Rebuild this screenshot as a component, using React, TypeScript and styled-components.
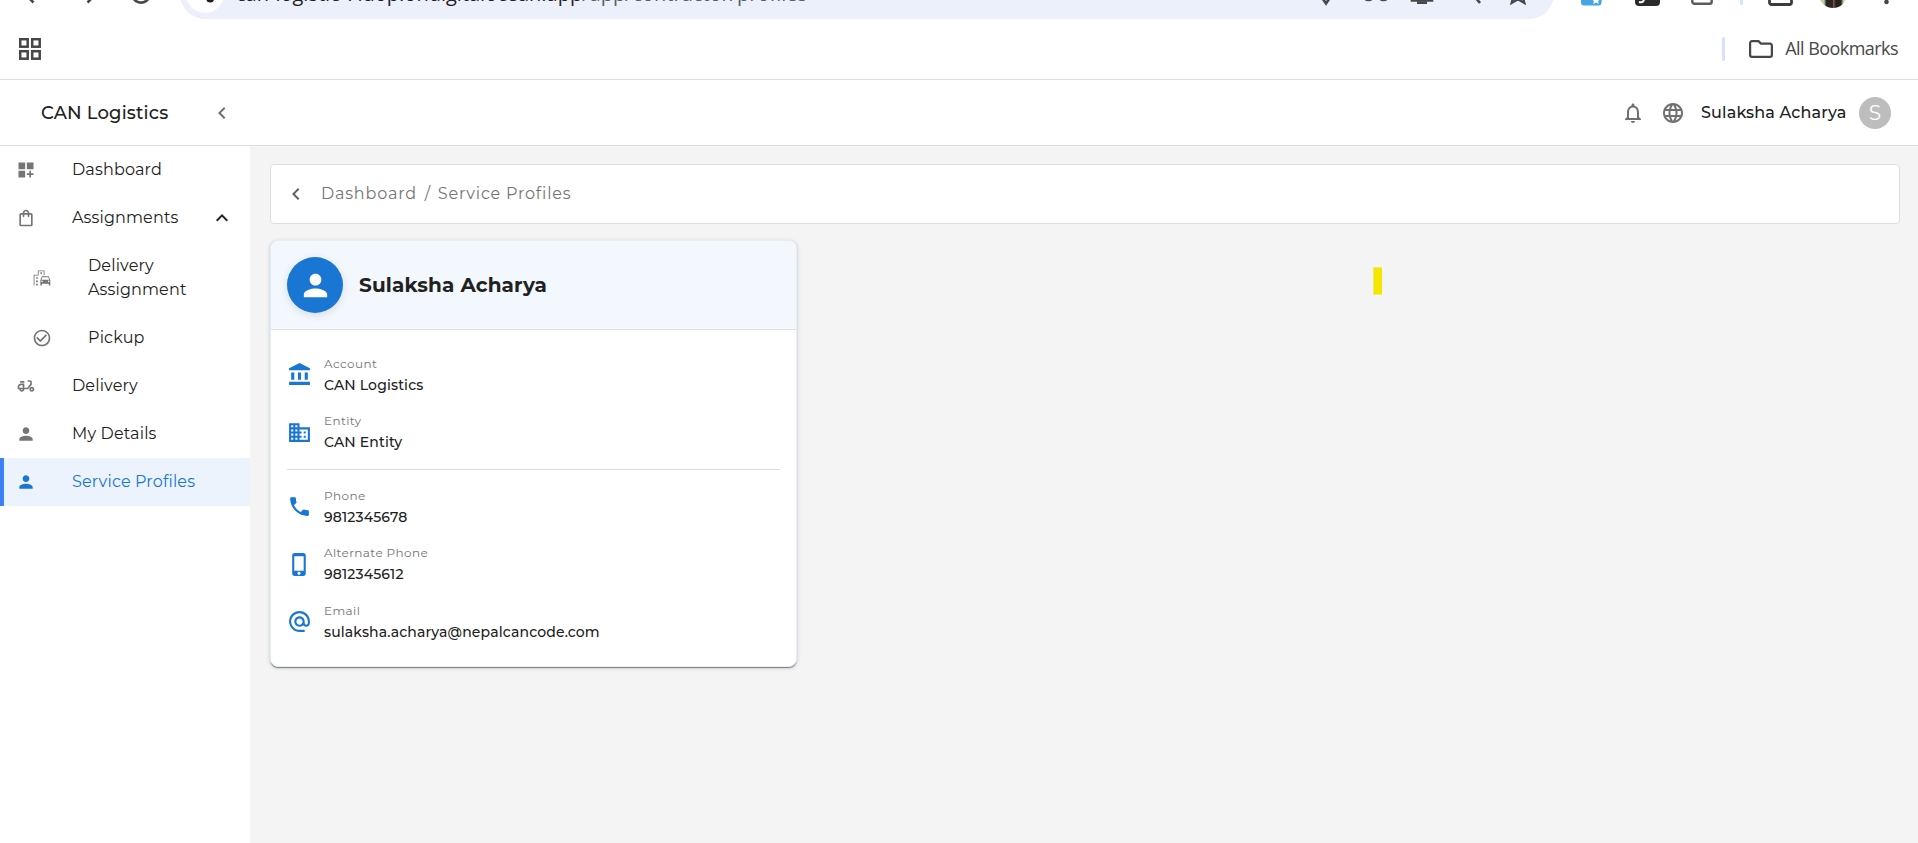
import React from "react";
import styled, { createGlobalStyle } from "styled-components";
import {
  MdAccountBalance,
  MdAlternateEmail,
  MdCheckCircleOutline,
  MdDashboardCustomize,
  MdDomain,
  MdKeyboardArrowLeft,
  MdKeyboardArrowUp,
  MdLanguage,
  MdNotificationsNone,
  MdOutlineDeliveryDining,
  MdOutlineEmojiTransportation,
  MdOutlineShoppingBag,
  MdPerson,
  MdPhone,
  MdPhoneIphone,
} from "react-icons/md";

const GlobalStyle = createGlobalStyle`
  * { box-sizing: border-box; }
  body {
    margin: 0;
    overflow: hidden;
    background: #fff;
    color: #212121;
    font-family: Montserrat, Inter, "Liberation Sans", sans-serif;
  }
  svg { display: block; flex: none; }
`;

const Page = styled.div`
  display: flex;
  flex-direction: column;
  height: 843px;
  overflow: hidden;
`;

/* Browser chrome */

const ChromeClip = styled.div`
  flex: none;
  display: flex;
  align-items: flex-end;
  height: 19px;
  overflow: hidden;
  background: #fff;
`;

const ChromeRow = styled.div`
  flex: none;
  display: flex;
  align-items: center;
  width: 100%;
  height: 50px;
  color: #474747;
`;

const ChromeItem = styled.span<{ $gap: number }>`
  flex: none;
  display: flex;
  margin-left: ${(p) => p.$gap}px;
`;

const AddressBar = styled.div`
  flex: none;
  display: flex;
  align-items: center;
  width: 1374px;
  height: 50px;
  margin-left: 26px;
  padding-left: 6px;
  border-radius: 25px;
  background: #ebf0fa;
`;

const SiteInfo = styled.div`
  flex: none;
  display: flex;
  align-items: center;
  justify-content: center;
  width: 38px;
  height: 38px;
  border-radius: 50%;
  background: #fff;
  color: #1f1f1f;
`;

const Address = styled.div`
  flex: none;
  width: 1075px;
  margin-left: 12px;
  font: 400 20px/28px "Open Sans", sans-serif;
  white-space: nowrap;
  color: #1f1f1f;
`;

const AddressPath = styled.span`
  color: #5a5d61;
`;

const ToolbarDivider = styled.span`
  flex: none;
  width: 3px;
  height: 22px;
  margin-left: 27px;
  border-radius: 2px;
  background: #d3e3fd;
`;

const ProfilePhoto = styled.span`
  flex: none;
  width: 28px;
  height: 28px;
  margin-left: 26px;
  border-radius: 50%;
  background: linear-gradient(90deg, #b9cfa6 0 18%, #2b2523 26% 48%, #7a5a48 52%, #26211f 60% 78%, #cfe0c0 88%);
`;

const BookmarkBar = styled.div`
  flex: none;
  display: flex;
  align-items: center;
  justify-content: space-between;
  height: 61px;
  padding: 0 20px 1px 19px;
  border-bottom: 1px solid #dedede;
  color: #474747;
`;

const BookmarkFolder = styled.div`
  display: flex;
  align-items: center;
  font: 400 18px/24px "Open Sans", sans-serif;
  letter-spacing: -0.55px;
`;

const BookmarkDivider = styled.span`
  width: 3px;
  height: 24px;
  margin-right: 24px;
  border-radius: 2px;
  background: #d3e3fd;
`;

const FolderLabel = styled.span`
  margin: -1px 0 0 12px;
`;

/* Application header */

const Header = styled.header`
  flex: none;
  display: flex;
  align-items: center;
  justify-content: space-between;
  height: 66px;
  padding: 0 27px 0 41px;
  border-bottom: 1px solid #dedede;
  background: #fff;
`;

const HeaderSide = styled.div`
  display: flex;
  align-items: center;
  color: #707070;
`;

const Brand = styled.div`
  width: 169px;
  font-size: 18px;
  font-weight: 500;
  letter-spacing: 0.15px;
  color: #212121;
`;

const HeaderIcon = styled.span`
  display: flex;
  margin-right: 16px;
`;

const UserName = styled.span`
  width: 158px;
  font-size: 16px;
  font-weight: 500;
  letter-spacing: 0.15px;
  color: #212121;
`;

const UserBadge = styled.span`
  display: flex;
  align-items: center;
  justify-content: center;
  width: 32px;
  height: 32px;
  border-radius: 50%;
  background: #bdbdbd;
  color: #fff;
  font-size: 20px;
`;

/* Sidebar */

const Body = styled.div`
  flex: 1;
  display: flex;
  min-height: 0;
`;

const Sidebar = styled.nav`
  flex: none;
  width: 250px;
  background: #fff;
`;

const NavItem = styled.a<{ $nested?: boolean; $active?: boolean }>`
  display: flex;
  align-items: center;
  min-height: 48px;
  padding: 12px 16px 12px ${(p) => (p.$nested ? 32 : 16)}px;
  color: ${(p) => (p.$active ? "#1976d2" : "#212121")};
  background: ${(p) => (p.$active ? "#ecf3fc" : "transparent")};
  box-shadow: ${(p) => (p.$active ? "inset 4px 0 0 #3b82f6" : "none")};
`;

const NavIcon = styled.span<{ $active?: boolean }>`
  flex: none;
  display: flex;
  width: 56px;
  color: ${(p) => (p.$active ? "#1976d2" : "#757575")};
`;

const NavLabel = styled.span`
  flex: 1;
  font-size: 16px;
  line-height: 24px;
  letter-spacing: 0.15px;
`;

/* Main content */

const Main = styled.main`
  position: relative;
  flex: 1;
  padding: 18px 18px 0 20px;
  background: #f4f4f4;
`;

const Breadcrumb = styled.div`
  display: flex;
  align-items: center;
  height: 60px;
  padding: 0 0 1px 13px;
  border: 1px solid #dedede;
  border-radius: 4px;
  background: #fff;
  color: #757575;
  font-size: 16px;
`;

const Crumb = styled.span`
  letter-spacing: 0.8px;
`;

const BackButton = styled.span`
  display: flex;
  width: 37px;
  color: #616161;
`;

const Slash = styled.span`
  width: 21px;
  text-align: center;
`;

const Card = styled.section`
  width: 527px;
  height: 427px;
  margin-top: 16px;
  border: 1px solid #e3effb;
  border-radius: 8px;
  overflow: hidden;
  background: #fff;
  box-shadow: 0 2px 1px -1px rgba(0, 0, 0, 0.3), 0 1px 1px rgba(0, 0, 0, 0.18), 0 1px 4px rgba(0, 0, 0, 0.16);
`;

const CardHeader = styled.div`
  display: flex;
  align-items: center;
  gap: 16px;
  height: 89px;
  padding: 0 16px;
  border-bottom: 1px solid #dde2e7;
  background: #f2f8fd;
`;

const ProfileAvatar = styled.span`
  display: flex;
  align-items: center;
  justify-content: center;
  width: 56px;
  height: 56px;
  border-radius: 50%;
  background: #1976d2;
  color: #fff;
  box-shadow: 0 2px 8px rgba(0, 0, 0, 0.12);
`;

const ProfileName = styled.h1`
  margin: 0;
  font-size: 20px;
  font-weight: 700;
  letter-spacing: 0.15px;
`;

const CardBody = styled.div`
  display: flex;
  flex-direction: column;
  gap: 16px;
  padding: 24px 16px;
`;

const Rule = styled.div`
  height: 1px;
  background: #dedede;
`;

const InfoRow = styled.div`
  display: flex;
  align-items: center;
  height: 41.5px;
  color: #1976d2;
`;

const InfoText = styled.div`
  display: flex;
  flex-direction: column;
  gap: 1px;
  margin-left: 12px;
  padding-top: 0.5px;
`;

const InfoLabel = styled.span`
  font-size: 12px;
  line-height: 20px;
  letter-spacing: 0.4px;
  color: #757575;
`;

const InfoValue = styled.span`
  font-size: 14px;
  font-weight: 500;
  line-height: 21.5px;
  letter-spacing: 0.15px;
  color: #212121;
`;

const Highlight = styled.div`
  position: absolute;
  left: 1123px;
  top: 121px;
  width: 9px;
  height: 28px;
  border: 1px solid #f3ec66;
  border-right-width: 0;
  background: #f5e600;
`;

interface InfoProps {
  icon: React.ReactNode;
  label: string;
  value: string;
}

const Info = ({ icon, label, value }: InfoProps) => (
  <InfoRow>
    {icon}
    <InfoText>
      <InfoLabel>{label}</InfoLabel>
      <InfoValue>{value}</InfoValue>
    </InfoText>
  </InfoRow>
);

const line = { fill: "none", stroke: "currentColor", strokeWidth: 2.6 };

const BrowserToolbar = () => (
  <ChromeClip>
    <ChromeRow>
      <ChromeItem $gap={20}>
        <svg width="26" height="26" viewBox="0 0 26 26" {...line}>
          <path d="M22 13H5M13.5 4.5 5 13l8.500 8.500" />
        </svg>
      </ChromeItem>
      <ChromeItem $gap={29}>
        <svg width="26" height="26" viewBox="0 0 26 26" {...line}>
          <path d="M4 13h17M12.500 4.500 21 13l-8.500 8.500" />
        </svg>
      </ChromeItem>
      <ChromeItem $gap={27}>
        <svg width="26" height="26" viewBox="0 0 26 26" {...line}>
          <path d="M20.500 8.500A8.700 8.700 0 1 0 21.700 13M21.500 3v6h-6" />
        </svg>
      </ChromeItem>
      <AddressBar>
        <SiteInfo>
          <svg width="22" height="22" viewBox="0 0 22 22" fill="none" stroke="currentColor" strokeWidth="2.2">
            <circle cx="5.500" cy="5" r="2.800" />
            <path d="M10 5h11M1 15.500h10" />
            <circle cx="16.200" cy="15.600" r="2.800" fill="currentColor" />
          </svg>
        </SiteInfo>
        <Address>
          can-logistic-7ldop.ondigitalocean.app<AddressPath>/app/contractor/profiles</AddressPath>
        </Address>
        <ChromeItem $gap={6}>
          <svg width="18" height="24" viewBox="0 0 18 24" {...line}>
            <path d="M9 21.500C5 15.500 2 12 2 8.500a7 7 0 0 1 14 0C16 12 13 15.500 9 21.500Z" />
            <circle cx="9" cy="8.500" r="1.500" />
          </svg>
        </ChromeItem>
        <ChromeItem $gap={27}>
          <svg width="28" height="18" viewBox="0 0 28 18" {...line}>
            <circle cx="6.500" cy="9.500" r="5.500" />
            <circle cx="21.500" cy="9.500" r="5.500" />
            <path d="M12 9.500h4" />
          </svg>
        </ChromeItem>
        <ChromeItem $gap={20}>
          <svg width="24" height="22" viewBox="0 0 24 22" {...line}>
            <path d="M22 10v7.500H2V2h10" />
            <path d="M7 19.700h10" />
            <path d="M17 2v8M13 7l4 4 4-4" />
          </svg>
        </ChromeItem>
        <ChromeItem $gap={33}>
          <svg width="24" height="22" viewBox="0 0 24 22" {...line}>
            <circle cx="9" cy="8" r="6" />
            <path d="m8 14 5 6" />
          </svg>
        </ChromeItem>
        <ChromeItem $gap={14}>
          <svg width="26" height="24" viewBox="0 0 26 24" fill="none" stroke="currentColor" strokeWidth="2.2">
            <path d="m13 2 3 7.200 7.500.6-5.700 5 1.600 6.200L13 17.200 6.600 21l1.600-6.200-5.700-5 7.500-.6Z" />
          </svg>
        </ChromeItem>
      </AddressBar>
      <ChromeItem $gap={27}>
        <svg width="22" height="24" viewBox="0 0 22 24">
          <path d="M3 1h16a3 3 0 0 1 3 3l-1.500 17a3 3 0 0 1-3 2.500H3a3 3 0 0 1-3-3V4a3 3 0 0 1 3-3Z" fill="#45a5e6" />
          <path d="m15 14 1.300 2.800 3 .3-2.200 2 .6 3-2.700-1.600-2.700 1.600.6-3-2.200-2 3-.3Z" fill="#fff" />
        </svg>
      </ChromeItem>
      <ChromeItem $gap={32}>
        <svg width="25" height="24" viewBox="0 0 25 24">
          <rect width="25" height="24" rx="4" fill="#2b2b2b" />
          <path d="M4 20c4 1 5-1 5-4M10 15l4-3" stroke="#fff" strokeWidth="2" fill="none" />
        </svg>
      </ChromeItem>
      <ChromeItem $gap={31}>
        <svg width="22" height="22" viewBox="0 0 22 22" fill="none" stroke="#5c5c5c" strokeWidth="2.400">
          <rect x="1.300" y="1.300" width="19.400" height="19.400" rx="2" />
        </svg>
      </ChromeItem>
      <ToolbarDivider />
      <ChromeItem $gap={25}>
        <svg width="25" height="24" viewBox="0 0 25 24" fill="none" stroke="#3c3c3c" strokeWidth="2.800">
          <rect x="1.500" y="1.500" width="22" height="21" rx="2" />
        </svg>
      </ChromeItem>
      <ProfilePhoto />
      <ChromeItem $gap={37}>
        <svg width="5" height="22" viewBox="0 0 5 22" fill="currentColor">
          <circle cx="2.500" cy="2.500" r="2.300" />
          <circle cx="2.500" cy="11" r="2.300" />
          <circle cx="2.500" cy="19" r="2.300" />
        </svg>
      </ChromeItem>
    </ChromeRow>
  </ChromeClip>
);

const Bookmarks = () => (
  <BookmarkBar>
    <svg width="22" height="22" viewBox="0 0 22 22" fill="none" stroke="currentColor" strokeWidth="2.500">
      <rect x="1.200" y="1.200" width="7.500" height="7.500" />
      <rect x="13.200" y="1.200" width="7.500" height="7.500" />
      <rect x="1.200" y="13.200" width="7.500" height="7.500" />
      <rect x="13.200" y="13.200" width="7.500" height="7.500" />
    </svg>
    <BookmarkFolder>
      <BookmarkDivider />
      <svg width="24" height="18" viewBox="0 0 24 18" fill="none" stroke="currentColor" strokeWidth="2.200">
        <path d="M3 1.100h6.500L12 3.600h9A1.900 1.900 0 0 1 22.900 5.500v9.500A1.900 1.900 0 0 1 21 16.900H3A1.900 1.900 0 0 1 1.100 15V3A1.900 1.900 0 0 1 3 1.100Z" />
      </svg>
      <FolderLabel>All Bookmarks</FolderLabel>
    </BookmarkFolder>
  </BookmarkBar>
);

export default function App() {
  return (
    <Page>
      <GlobalStyle />
      <BrowserToolbar />
      <Bookmarks />
      <Header>
        <HeaderSide>
          <Brand>CAN Logistics</Brand>
          <MdKeyboardArrowLeft size={24} />
        </HeaderSide>
        <HeaderSide>
          <HeaderIcon>
            <MdNotificationsNone size={24} />
          </HeaderIcon>
          <HeaderIcon>
            <MdLanguage size={24} />
          </HeaderIcon>
          <UserName>Sulaksha Acharya</UserName>
          <UserBadge>S</UserBadge>
        </HeaderSide>
      </Header>
      <Body>
        <Sidebar>
          <NavItem>
            <NavIcon><MdDashboardCustomize size={20} /></NavIcon>
            <NavLabel>Dashboard</NavLabel>
          </NavItem>
          <NavItem>
            <NavIcon><MdOutlineShoppingBag size={20} /></NavIcon>
            <NavLabel>Assignments</NavLabel>
            <MdKeyboardArrowUp size={24} />
          </NavItem>
          <NavItem $nested>
            <NavIcon><MdOutlineEmojiTransportation size={20} /></NavIcon>
            <NavLabel>
              Delivery
              <br />
              Assignment
            </NavLabel>
          </NavItem>
          <NavItem $nested>
            <NavIcon><MdCheckCircleOutline size={20} /></NavIcon>
            <NavLabel>Pickup</NavLabel>
          </NavItem>
          <NavItem>
            <NavIcon><MdOutlineDeliveryDining size={20} /></NavIcon>
            <NavLabel>Delivery</NavLabel>
          </NavItem>
          <NavItem>
            <NavIcon><MdPerson size={20} /></NavIcon>
            <NavLabel>My Details</NavLabel>
          </NavItem>
          <NavItem $active>
            <NavIcon $active><MdPerson size={20} /></NavIcon>
            <NavLabel>Service Profiles</NavLabel>
          </NavItem>
        </Sidebar>
        <Main>
          <Breadcrumb>
            <BackButton><MdKeyboardArrowLeft size={24} /></BackButton>
            <Crumb>Dashboard</Crumb>
            <Slash>/</Slash>
            <Crumb>Service Profiles</Crumb>
          </Breadcrumb>
          <Card>
            <CardHeader>
              <ProfileAvatar><MdPerson size={35} /></ProfileAvatar>
              <ProfileName>Sulaksha Acharya</ProfileName>
            </CardHeader>
            <CardBody>
              <Info icon={<MdAccountBalance size={25} />} label="Account" value="CAN Logistics" />
              <Info icon={<MdDomain size={25} />} label="Entity" value="CAN Entity" />
              <Rule />
              <Info icon={<MdPhone size={25} />} label="Phone" value="9812345678" />
              <Info icon={<MdPhoneIphone size={25} />} label="Alternate Phone" value="9812345612" />
              <Info icon={<MdAlternateEmail size={25} />} label="Email" value="sulaksha.acharya@nepalcancode.com" />
            </CardBody>
          </Card>
          <Highlight />
        </Main>
      </Body>
    </Page>
  );
}
